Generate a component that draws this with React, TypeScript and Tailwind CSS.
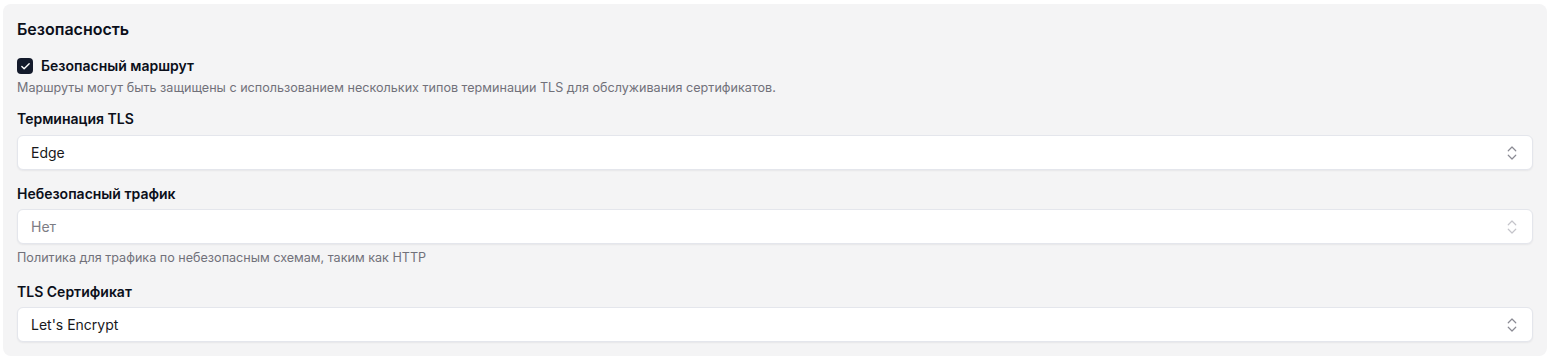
import React from "react";
import { ChevronsUpDown, Check } from "lucide-react";

const font = { fontFamily: "Inter, 'Noto Sans', sans-serif" };

// Поле выбора в виде кнопки
const SelectBox = ({ value, muted = false }: { value: string; muted?: boolean }) => {
  return (
    <button
      type="button"
      className="flex h-[35px] w-full items-center justify-between rounded-md border border-[#e4e6ec] bg-white pl-[13px] pr-[11px] text-sm shadow-[0_1px_2px_rgba(15,23,42,0.06)]"
    >
      <span className={muted ? "text-[#7c7c84]" : "text-[#18181b]"}>{value}</span>
      <ChevronsUpDown
        size={18}
        strokeWidth={1.6}
        className={muted ? "text-[#c4c4ca]" : "text-[#8a8a93]"}
      />
    </button>
  );
};

const Label = ({ children, className = "" }: { children: React.ReactNode; className?: string }) => (
  <p className={"text-sm font-semibold leading-5 text-[#0b0f1a] " + className}>{children}</p>
);

export default function App() {
  return (
    <div className="bg-white pl-[3px] pr-2 pt-1" style={font}>
      <div className="rounded-lg bg-[#f4f4f5] px-3.5 pb-3.5 pt-[13px]">
        {/* Заголовок */}
        <h2 className="text-base font-semibold leading-6 text-[#0b0f1a]">Безопасность</h2>

        {/* Безопасный маршрут */}
        <div className="mt-[15px] flex h-5 items-center gap-2">
          <div className="grid size-4 place-items-center rounded-[4px] bg-[#131a2b]">
            <Check size={11} strokeWidth={3} className="text-white" />
          </div>
          <span className="text-sm font-semibold text-[#0b0f1a]">Безопасный маршрут</span>
        </div>
        <p className="mt-1 text-[12.6px] leading-4 text-[#71717a]">
          Маршруты могут быть защищены с использованием нескольких типов терминации TLS для обслуживания сертификатов.
        </p>

        {/* Терминация TLS */}
        <Label className="mt-[13px]">Терминация TLS</Label>
        <div className="mt-1.5">
          <SelectBox value="Edge" />
        </div>

        {/* Небезопасный трафик */}
        <Label className="mt-[14px]">Небезопасный трафик</Label>
        <div className="mt-[5px]">
          <SelectBox value="Нет" muted />
        </div>
        <p className="mt-1.5 text-[12.6px] leading-4 text-[#71717a]">
          Политика для трафика по небезопасным схемам, таким как HTTP
        </p>

        {/* TLS Сертификат */}
        <Label className="mt-4">TLS Сертификат</Label>
        <div className="mt-[5px]">
          <SelectBox value="Let's Encrypt" />
        </div>
      </div>
    </div>
  );
}
